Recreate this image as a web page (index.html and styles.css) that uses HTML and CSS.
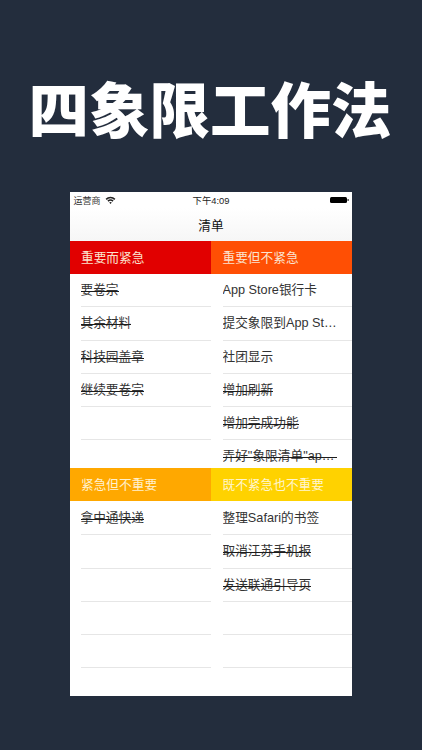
FILE: index.html
```html
<!DOCTYPE html>
<html lang="zh-CN">
<head>
<meta charset="utf-8">
<title>四象限工作法</title>
<link rel="stylesheet" href="styles.css">
</head>
<body>
<header class="hero"><h1>四象限工作法</h1></header>
<main class="phone">
  <div class="status">
    <div class="status-side">
      <span>运营商</span>
      <svg class="wifi" width="11" height="8" viewBox="0 0 11 8"><path d="M0.6 2.7A7 7 0 0 1 10.4 2.7L9.3 3.9A5.4 5.4 0 0 0 1.7 3.9Z M2.4 4.6A4.5 4.5 0 0 1 8.6 4.6L7.5 5.7A3 3 0 0 0 3.5 5.7Z M4.2 6.5A1.9 1.9 0 0 1 6.8 6.5L5.5 7.9Z" fill="#222"/></svg>
    </div>
    <span class="time">下午4:09</span>
    <div class="status-side status-right">
      <svg width="19" height="8" viewBox="0 0 19 8"><rect x="0" y="1" width="17" height="6" rx="1.5" fill="#000"/><rect x="17.5" y="3" width="1.2" height="2" fill="#333"/></svg>
    </div>
  </div>
  <div class="nav">清单</div>
  <div class="grid">
    <section class="quad left">
      <h2 class="head red">重要而紧急</h2>
      <ul>
        <li class="done"><span>要卷宗</span></li>
        <li class="done"><span>其余材料</span></li>
        <li class="done"><span>科技园盖章</span></li>
        <li class="done"><span>继续要卷宗</span></li>
        <li></li>
      </ul>
    </section>
    <section class="quad right">
      <h2 class="head orange">重要但不紧急</h2>
      <ul>
        <li><span>App Store银行卡</span></li>
        <li><span>提交象限到App Store</span></li>
        <li><span>社团显示</span></li>
        <li class="done"><span>增加刷新</span></li>
        <li class="done"><span>增加完成功能</span></li>
        <li class="done cut"><span>弄好"象限清单"app的介绍</span></li>
      </ul>
    </section>
    <section class="quad left lower">
      <h2 class="head amber">紧急但不重要</h2>
      <ul>
        <li class="done"><span>拿中通快递</span></li>
        <li></li><li></li><li></li><li></li>
      </ul>
    </section>
    <section class="quad right lower">
      <h2 class="head yellow">既不紧急也不重要</h2>
      <ul>
        <li><span>整理Safari的书签</span></li>
        <li class="done"><span>取消江苏手机报</span></li>
        <li class="done"><span>发送联通引导页</span></li>
        <li></li><li></li>
      </ul>
    </section>
  </div>
</main>
</body>
</html>
```
FILE: styles.css
```css
* { box-sizing: border-box; margin: 0; padding: 0; }
html, body { height: 750px; overflow: hidden; }
body {
  background: #232d3d;
  font-family: "Liberation Sans", "Noto Sans CJK SC", sans-serif;
}
.hero {
  height: 192px;
  padding: 73px 2px 0 0;
  display: flex;
  justify-content: center;
}
.hero h1 {
  font-family: "Noto Sans CJK SC", sans-serif;
  font-weight: 900;
  font-size: 60.5px;
  line-height: 68px;
  color: #fff;
  white-space: nowrap;
}
.phone {
  width: 282px;
  height: 504px;
  margin-left: 70px;
  background: #fff;
  display: flex;
  flex-direction: column;
  overflow: hidden;
}
.status {
  height: 16px;
  padding: 0 3.5px;
  display: flex;
  align-items: center;
  justify-content: space-between;
  font-size: 9px;
  color: #333;
}
.status-side { width: 80px; display: flex; align-items: center; gap: 4px; }
.status-right { justify-content: flex-end; }
.time { color: #222; font-size: 9.4px; }
.nav {
  height: 33px;
  padding-bottom: 1px;
  display: flex;
  align-items: center;
  justify-content: center;
  font-size: 12.7px;
  color: #111;
  background: linear-gradient(#fff, #f6f6f6);
}
.grid {
  flex: 1;
  display: grid;
  grid-template-columns: 141px 141px;
  grid-template-rows: 227px 228px;
}
.quad { overflow: hidden; }
.head {
  height: 33px;
  padding: 0 0 2px 11px;
  display: flex;
  align-items: center;
  font-size: 12.7px;
  font-weight: 400;
  color: #fbe3cf;
}
.right .head { padding-left: 11.5px; }
.red { background: #e10000; }
.orange { background: #ff4f04; }
.amber { background: #ffa800; color: #fff1cf; }
.yellow { background: #ffd200; color: #fff6cf; }
ul { list-style: none; }
.lower ul { padding-top: 1px; }
li {
  height: 33.25px;
  border-bottom: 1px solid #e6e6e6;
  display: flex;
  align-items: center;
  font-size: 12.7px;
  color: #333;
}
.left li { margin-left: 10.5px; }
.right li { margin-left: 11.5px; }
li span {
  display: block;
  position: relative;
  max-width: 118px;
  white-space: nowrap;
  overflow: hidden;
  text-overflow: ellipsis;
  line-height: 18px;
}
.done span::after {
  content: "";
  position: absolute;
  left: 0;
  right: 0;
  top: 10px;
  height: 1px;
  background: #1c1c1c;
}
.cut span::after { right: 4px; }
```
